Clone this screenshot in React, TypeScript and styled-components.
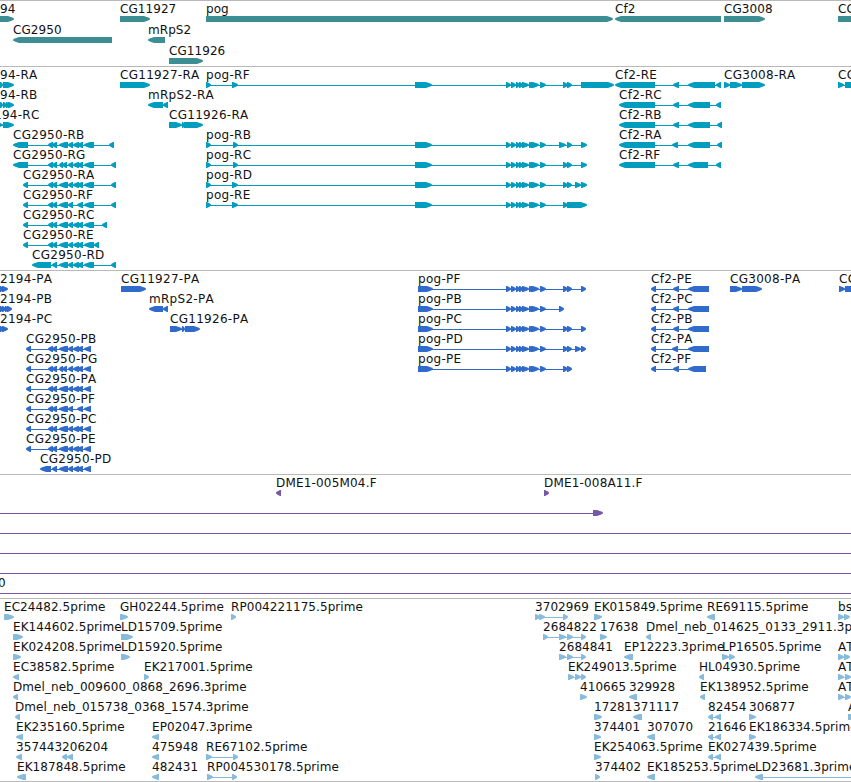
import React from 'react';
import styled, { createGlobalStyle } from 'styled-components';

type Exon = [number, number];

interface FeatureData {
  name: string;
  strand: 1 | -1;
  exons: Exon[];
  // overrides where the intron line runs to when it leaves the view
  lineTo?: Exon;
}

interface TrackData {
  id: string;
  color: string;
  rowHeight: number;
  padBottom: number;
  spacing: number;
  rows: FeatureData[][];
}

const fwd = (name: string, ...exons: Exon[]): FeatureData => ({ name, strand: 1, exons });
const rev = (name: string, ...exons: Exon[]): FeatureData => ({ name, strand: -1, exons });

const pogMid: Exon[] = [[506, 511], [511, 516], [516, 520], [519, 523], [522, 529], [529, 535], [531, 539], [540, 546]];
const cg2950Mid: Exon[] = [[48, 53], [52, 57], [59, 68], [68, 73], [73, 79], [77, 83]];
const cg2950Split: Exon[] = [[48, 53], [52, 57], [59, 63], [62, 67], [68, 73], [73, 79], [77, 83]];
const cg2950Skip: Exon[] = [[48, 53], [52, 57], [59, 68], [68, 73], [77, 83]];

const genes: FeatureData[][] = [
  [
    fwd('94', [0, 14]),
    fwd('CG11927', [120, 150]),
    fwd('pog', [206, 613]),
    rev('Cf2', [615, 721]),
    fwd('CG3008', [724, 765]),
    fwd('CG3009', [838, 880]),
  ],
  [rev('CG2950', [13, 112]), rev('mRpS2', [148, 165])],
  [fwd('CG11926', [169, 203])],
];

const transcripts: FeatureData[][] = [
  [
    fwd('94-RA', [0, 3], [3, 14]),
    fwd('CG11927-RA', [120, 150]),
    fwd('pog-RF', [206, 211], [232, 238], [415, 432], ...pogMid, [563, 568], [567, 572], [581, 614]),
    rev('Cf2-RE', [615, 655], [673, 679], [688, 715], [716, 721]),
    fwd('CG3008-RA', [724, 730], [730, 742], [742, 765]),
    fwd('CG3009-RA', [838, 844], [845, 880]),
  ],
  [
    fwd('94-RB', [0, 3], [3, 7], [6, 10], [8, 14]),
    rev('mRpS2-RA', [148, 163], [163, 168]),
    rev('Cf2-RC', [619, 655], [673, 679], [688, 710], [716, 721]),
  ],
  [
    fwd('194-RC', [-6, 3], [3, 14]),
    fwd('CG11926-RA', [169, 182], [182, 185], [184, 203]),
    rev('Cf2-RB', [619, 655], [673, 679], [688, 710], [717, 722]),
  ],
  [
    rev('CG2950-RB', [13, 28], ...cg2950Mid, [84, 94], [109, 114]),
    fwd('pog-RB', [206, 211], [233, 238], [415, 432], ...pogMid, [559, 566], [567, 572], [581, 587]),
    rev('Cf2-RA', [619, 655], [672, 678], [688, 710], [717, 722]),
  ],
  [
    rev('CG2950-RG', [13, 28], ...cg2950Split, [84, 94], [111, 116]),
    fwd('pog-RC', [206, 211], [233, 238], [415, 432], ...pogMid, [563, 568], [567, 572], [581, 587]),
    rev('Cf2-RF', [619, 655], [673, 679], [688, 708], [716, 721]),
  ],
  [
    rev('CG2950-RA', [23, 28], ...cg2950Mid, [84, 94], [111, 116]),
    fwd('pog-RD', [206, 211], [232, 238], [415, 432], ...pogMid, [563, 568], [567, 572], [575, 581], [581, 587]),
  ],
  [
    rev('CG2950-RF', [23, 28], ...cg2950Skip, [84, 94], [111, 116]),
    fwd('pog-RE', [206, 211], [232, 238], [415, 432], ...pogMid, [563, 568], [567, 587]),
  ],
  [rev('CG2950-RC', [23, 28], ...cg2950Mid, [84, 94], [102, 107])],
  [rev('CG2950-RE', [23, 28], ...cg2950Mid, [84, 94], [94, 99])],
  [rev('CG2950-RD', [32, 51], [52, 57], ...cg2950Mid.slice(2), [84, 94], [111, 116])],
];

const proteins: FeatureData[][] = [
  [
    fwd('2194-PA', [0, 3], [2, 8]),
    fwd('CG11927-PA', [121, 146]),
    fwd('pog-PF', [418, 433], ...pogMid, [563, 568], [567, 572], [581, 586]),
    rev('Cf2-PE', [651, 656], [673, 679], [688, 709]),
    fwd('CG3008-PA', [730, 742], [742, 762]),
    fwd('CG3009-PA', [839, 845], [845, 880]),
  ],
  [
    fwd('2194-PB', [0, 3], [2, 6], [5, 9], [7, 12]),
    rev('mRpS2-PA', [149, 163], [163, 168]),
    fwd('pog-PB', [418, 433], ...pogMid, [559, 564]),
    rev('Cf2-PC', [651, 656], [673, 679], [688, 709]),
  ],
  [
    fwd('2194-PC', [0, 3], [2, 8]),
    fwd('CG11926-PA', [170, 182], [182, 185], [185, 200]),
    fwd('pog-PC', [418, 433], ...pogMid, [563, 568], [567, 572], [581, 586]),
    rev('Cf2-PB', [651, 656], [673, 679], [688, 709]),
  ],
  [
    rev('CG2950-PB', [26, 31], ...cg2950Mid, [84, 91]),
    fwd('pog-PD', [418, 433], ...pogMid, [563, 568], [567, 572], [575, 581], [581, 586]),
    rev('Cf2-PA', [651, 656], [672, 678], [688, 709]),
  ],
  [
    rev('CG2950-PG', [26, 31], ...cg2950Split, [84, 91]),
    fwd('pog-PE', [418, 433], ...pogMid, [563, 568], [567, 572]),
    rev('Cf2-PF', [651, 656], [673, 679], [688, 706]),
  ],
  [rev('CG2950-PA', [26, 31], ...cg2950Mid, [84, 91])],
  [rev('CG2950-PF', [26, 31], ...cg2950Skip, [84, 91])],
  [rev('CG2950-PC', [26, 31], ...cg2950Mid, [84, 91])],
  [rev('CG2950-PE', [26, 31], ...cg2950Mid, [84, 91])],
  [rev('CG2950-PD', [40, 51], [52, 57], ...cg2950Mid.slice(2), [84, 91])],
];

const spanning: FeatureData = { name: '', strand: 1, exons: [], lineTo: [0, 851] };

const clones: FeatureData[][] = [
  [rev('DME1-005M04.F', [276, 281]), fwd('DME1-008A11.F', [544, 549])],
  [{ name: '', strand: 1, exons: [[593, 603]], lineTo: [0, 593] }],
  [spanning],
  [spanning],
  [spanning],
  [{ name: '0', strand: 1, exons: [], lineTo: [-2, 851] }],
];

const ests: FeatureData[][] = [
  [
    fwd('EC24482.5prime', [4, 14]),
    fwd('GH02244.5prime', [120, 128]),
    fwd('RP004221175.5prime', [231, 236]),
    fwd('3702969', [535, 540], [539, 545], [563, 568]),
    fwd('EK015849.5prime', [594, 602]),
    rev('RE69115.5prime', [707, 715]),
    fwd('bs12g03.y1', [838, 844], [844, 850]),
  ],
  [
    fwd('EK144602.5prime', [13, 23]),
    fwd('LD15709.5prime', [121, 133]),
    fwd('2684822', [543, 548], [559, 566], [567, 573], [581, 586]),
    fwd('17638', [600, 607]),
    rev('Dmel_neb_014625_0133_2911.3prime', [646, 651]),
  ],
  [
    fwd('EK024208.5prime', [13, 21]),
    fwd('LD15920.5prime', [121, 130]),
    fwd('2684841', [559, 566], [567, 573], [581, 586]),
    rev('EP12223.3prime', [624, 633]),
    fwd('LP16505.5prime', [722, 729], [729, 735]),
    fwd('AT07759', [838, 844], [844, 850]),
  ],
  [
    rev('EC38582.5prime', [13, 19]),
    fwd('EK217001.5prime', [144, 149]),
    fwd('EK249013.5prime', [568, 574], [575, 581], [581, 586]),
    rev('HL04930.5prime', [699, 704]),
    fwd('AT13091', [838, 844], [845, 851]),
  ],
  [
    rev('Dmel_neb_009600_0868_2696.3prime', [13, 18]),
    fwd('410665', [580, 587]),
    rev('329928', [629, 637]),
    rev('EK138952.5prime', [700, 705]),
    fwd('AT15447', [838, 844], [845, 851]),
  ],
  [
    rev('Dmel_neb_015738_0368_1574.3prime', [15, 20]),
    fwd('17281', [594, 602]),
    rev('371117', [633, 642]),
    rev('82454', [708, 713], [715, 721]),
    fwd('306877', [749, 756]),
    fwd('AT22870', [848, 856]),
  ],
  [
    rev('EK235160.5prime', [16, 23]),
    rev('EP02047.3prime', [152, 159]),
    fwd('374401', [594, 601]),
    rev('307070', [647, 655]),
    rev('21646', [708, 713], [715, 721]),
    fwd('EK186334.5prime', [749, 756]),
  ],
  [
    rev('357443', [16, 22]),
    rev('206204', [62, 67], [67, 73]),
    rev('475948', [152, 159]),
    fwd('RE67102.5prime', [206, 212], [233, 238]),
    fwd('EK254063.5prime', [594, 601]),
    rev('EK027439.5prime', [708, 713], [715, 721]),
  ],
  [
    rev('EK187848.5prime', [17, 26]),
    rev('482431', [152, 159]),
    fwd('RP004530178.5prime', [207, 213], [232, 237]),
    fwd('374402', [595, 600]),
    rev('EK185253.5prime', [647, 655]),
    { name: 'LD23681.3prime', strand: -1, exons: [[755, 763]], lineTo: [763, 870] },
  ],
];

const tracks: TrackData[] = [
  { id: 'genes', color: '#3d8e94', rowHeight: 21, padBottom: 1, spacing: 0.06, rows: genes },
  { id: 'transcripts', color: '#009dbf', rowHeight: 20, padBottom: 2, spacing: 0.28, rows: transcripts },
  { id: 'proteins', color: '#306bcc', rowHeight: 20, padBottom: 2, spacing: 0.28, rows: proteins },
  { id: 'clones', color: '#7657a9', rowHeight: 20, padBottom: 2, spacing: 0.18, rows: clones },
  { id: 'ests', color: '#86bbdc', rowHeight: 20, padBottom: 1, spacing: 0.07, rows: ests },
];

const GlobalStyle = createGlobalStyle`
  body {
    margin: 0;
    background: #fff;
    overflow: hidden;
  }
`;

const Browser = styled.main`
  width: 851px;
  overflow: hidden;
  border-bottom: 1px solid #b9b9b9;
  font-family: 'DejaVu Sans', sans-serif;
  font-size: 12px;
  font-kerning: none;
  line-height: 14px;
  color: #111;
`;

const Track = styled.section<{ $padBottom: number; $spacing: number }>`
  padding: 1px 0 ${p => p.$padBottom}px;
  border-top: 1px solid #b9b9b9;
  letter-spacing: ${p => p.$spacing}px;
`;

const Row = styled.div<{ $height: number }>`
  display: grid;
  grid-template-columns: minmax(0, 1fr);
  height: ${p => p.$height}px;
`;

/* every feature shares the row's single cell and is pushed to its start */
const Feature = styled.div<{ $start: number }>`
  grid-area: 1 / 1 / 2 / 2;
  justify-self: start;
  margin-left: ${p => p.$start}px;
  white-space: nowrap;
`;

const Label = styled.div`
  height: 14px;
`;

const Glyph = styled.svg<{ $color: string }>`
  display: block;
  fill: ${p => p.$color};
`;

const exonPath = ([a, b]: Exon, strand: number, start: number) => {
  const head = Math.min(6, b - a - 1);
  const tip = (strand > 0 ? b : a) - start;
  const tail = (strand > 0 ? a : b) - start;
  const neck = tip - strand * head;
  const mid = tip - strand * head * 0.4;
  return `M${tail} 0H${neck}L${mid} 1.3L${tip} 2.5V3.5L${mid} 4.7L${neck} 6H${tail}Z`;
};

const FeatureItem = ({ data, color }: { data: FeatureData; color: string }) => {
  const { name, strand, exons, lineTo } = data;
  const edges = [...exons.flat(), ...(lineTo || [])];
  const start = Math.min(...edges);
  const end = Math.max(...edges);
  const [l1, l2] = lineTo || [exons[0][0] + 2, exons[exons.length - 1][1] - 2];

  return (
    <Feature $start={start}>
      <Label>{name}</Label>
      <Glyph $color={color} width={end - start} height={6}>
        <rect x={l1 - start} y={3} width={l2 - l1} height={1} />
        {exons.map((exon, i) => (
          <path key={i} d={exonPath(exon, strand, start)} />
        ))}
      </Glyph>
    </Feature>
  );
};

const App = () => {
  return (
    <>
      <GlobalStyle />
      <Browser>
        {tracks.map(track => (
          <Track key={track.id} $padBottom={track.padBottom} $spacing={track.spacing}>
            {track.rows.map((row, i) => (
              <Row key={i} $height={track.rowHeight}>
                {row.map((data, j) => (
                  <FeatureItem key={j} data={data} color={track.color} />
                ))}
              </Row>
            ))}
          </Track>
        ))}
      </Browser>
    </>
  );
};

export default App;
